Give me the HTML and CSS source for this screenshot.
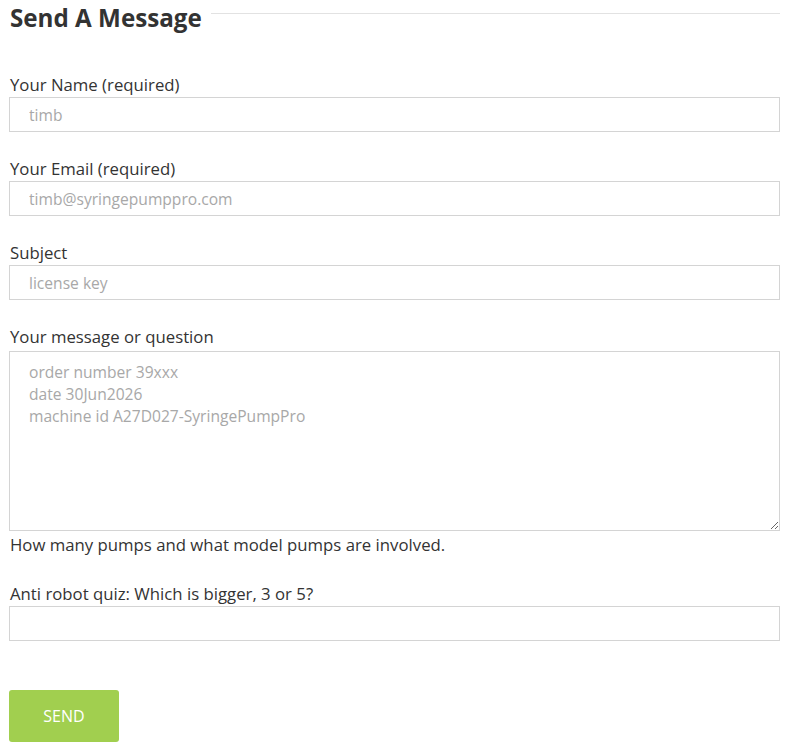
FILE: index.html
```html
<!DOCTYPE html>
<html lang="en">
<head>
    <meta charset="UTF-8">
    <meta name="viewport" content="width=device-width, initial-scale=1.0">
    <title>Send A Message</title>
    <link rel="stylesheet" href="styles.css">
</head>
<body>
    <div class="contact-container">
        <!-- Heading with rule -->
        <div class="section-title">
            <h2>Send A Message</h2>
            <span class="title-rule"></span>
        </div>

        <form class="contact-form" id="contactForm">
            <div class="field">
                <label>Your Name (required)</label>
                <input type="text" name="name" placeholder="timb" required>
            </div>

            <div class="field">
                <label>Your Email (required)</label>
                <input type="email" name="email" placeholder="timb@syringepumppro.com" required>
            </div>

            <div class="field">
                <label>Subject</label>
                <input type="text" name="subject" placeholder="license key">
            </div>

            <div class="field field-message">
                <label>Your message or question</label>
                <textarea name="message" placeholder="order number 39xxx&#10;date 30Jun2026&#10;machine id A27D027-SyringePumpPro"></textarea>
                <p class="hint">How many pumps and what model pumps are involved.</p>
            </div>

            <div class="field">
                <label>Anti robot quiz: Which is bigger, 3 or 5?</label>
                <input type="text" name="quiz">
            </div>

            <button type="submit">Send</button>
        </form>
    </div>
</body>
</html>
```

FILE: styles.css
```css
:root {
    --text-dark: #333333;
    --border-color: #d4d4d4;
    --placeholder: #a8a8a8;
    --accent: #a1cf4f;
}

* {
    margin: 0;
    padding: 0;
    box-sizing: border-box;
    font-family: 'Open Sans', sans-serif;
}

body {
    background: white;
    color: var(--text-dark);
}

.contact-container {
    width: 771px;
    margin-left: 9px;
}

.section-title {
    display: flex;
    align-items: flex-start;
    gap: 9px;
    height: 36px;
}

.section-title h2 {
    font-size: 24.2px;
    font-weight: 700;
    line-height: 36px;
    margin-left: 1px;
    color: var(--text-dark);
}

.title-rule {
    flex: 1;
    border-top: 1px solid #e2e2e2;
    margin-top: 13px;
}

.contact-form {
    padding-top: 37px;
}

.field {
    margin-bottom: 25px;
}

label {
    display: block;
    font-size: 16.75px;
    line-height: 24px;
    margin-left: 1px;
}

input, textarea {
    display: block;
    width: 100%;
    border: 1px solid var(--border-color);
    border-radius: 0;
    font-size: 15.6px;
    color: var(--text-dark);
    background: white;
    padding: 0 19px;
}

input {
    height: 35px;
}

textarea {
    height: 180px;
    margin-top: 2px;
    line-height: 22px;
    padding-top: 9px;
    resize: vertical;
}

input::placeholder, textarea::placeholder {
    color: var(--placeholder);
    opacity: 1;
}

.field-message {
    margin-bottom: 25px;
}

.hint {
    font-size: 16.75px;
    line-height: 24px;
    margin-left: 1px;
    margin-top: 2px;
}

button[type="submit"] {
    display: block;
    margin-top: 49px;
    width: 110px;
    height: 52px;
    background: var(--accent);
    color: white;
    border: none;
    border-radius: 3px;
    font-size: 16px;
    text-transform: uppercase;
    cursor: pointer;
}
```
